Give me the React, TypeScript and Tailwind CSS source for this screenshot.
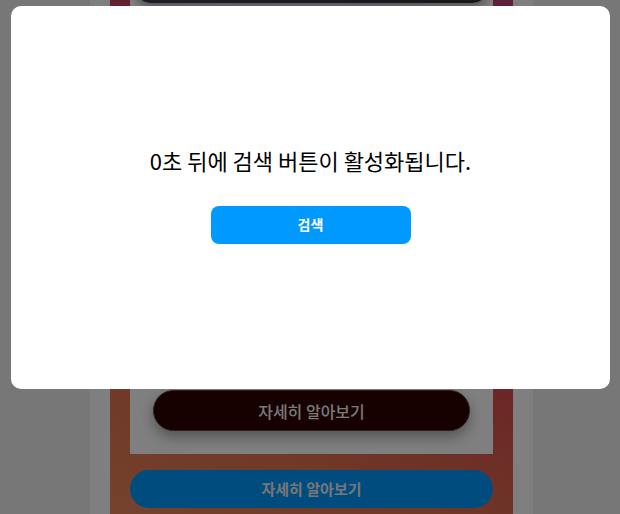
import { useEffect, useState } from "react";

const KR_FONT = "font-['Noto_Sans_CJK_KR','Noto_Sans',sans-serif]";

export default function App() {
  // 검색 버튼 활성화까지 남은 시간(초)
  const [countdown, setCountdown] = useState(0);

  useEffect(() => {
    if (countdown <= 0) return;
    const timer = setTimeout(() => setCountdown((c) => c - 1), 1000);
    return () => clearTimeout(timer);
  }, [countdown]);

  return (
    <div className={`min-h-screen overflow-hidden bg-[#eeeeee] ${KR_FONT}`}>
      {/* 본문 (스크롤된 상태) */}
      <div className="ml-[90px] -mt-[100px] w-[443px] bg-white px-[20px]">
        <section className="bg-[linear-gradient(205deg,#b83f82_0%,#c8405e_35%,#d4474e_55%,#e0704f_78%,#ea8a5c_100%)] px-[20px] pt-[20px] pb-[40px]">
          {/* 카드 */}
          <div className="bg-white px-[6px] pb-[23px]">
            <button className="mt-[39px] block h-[44px] w-full rounded-[14px] bg-[linear-gradient(90deg,#3a404c,#2a2e36)] shadow-[0_4px_8px_rgba(0,0,0,0.35)]" />
            <div className="h-[387px]" />
            <div className="flex justify-center">
              <button className="block h-[41px] w-[317px] rounded-full border border-[#5a3a3a] bg-[#2e0000] text-[16px] font-medium text-[#f2f2f2] shadow-[0_6px_14px_rgba(0,0,0,0.35)]">
                자세히 알아보기
              </button>
            </div>
          </div>

          <button className="mt-[16px] block h-[38px] w-full rounded-full bg-[#0098fe] text-[15px] font-bold text-[#eeeeee]">
            자세히 알아보기
          </button>
        </section>
      </div>

      {/* 모달 */}
      <div className="fixed inset-0 flex justify-center bg-black/50 pl-[1px] pt-[6px]">
        <div className="flex h-[383px] w-[599px] flex-col items-center justify-center rounded-[10px] bg-white pb-[7px]">
          <p className="text-[22px] leading-[30px] text-black">
            {countdown}초 뒤에 검색 버튼이 활성화됩니다.
          </p>
          <button
            disabled={countdown > 0}
            className="mt-[31px] h-[38px] w-[200px] rounded-[8px] bg-[#0099ff] text-[14px] font-bold text-white"
          >
            검색
          </button>
        </div>
      </div>
    </div>
  );
}
